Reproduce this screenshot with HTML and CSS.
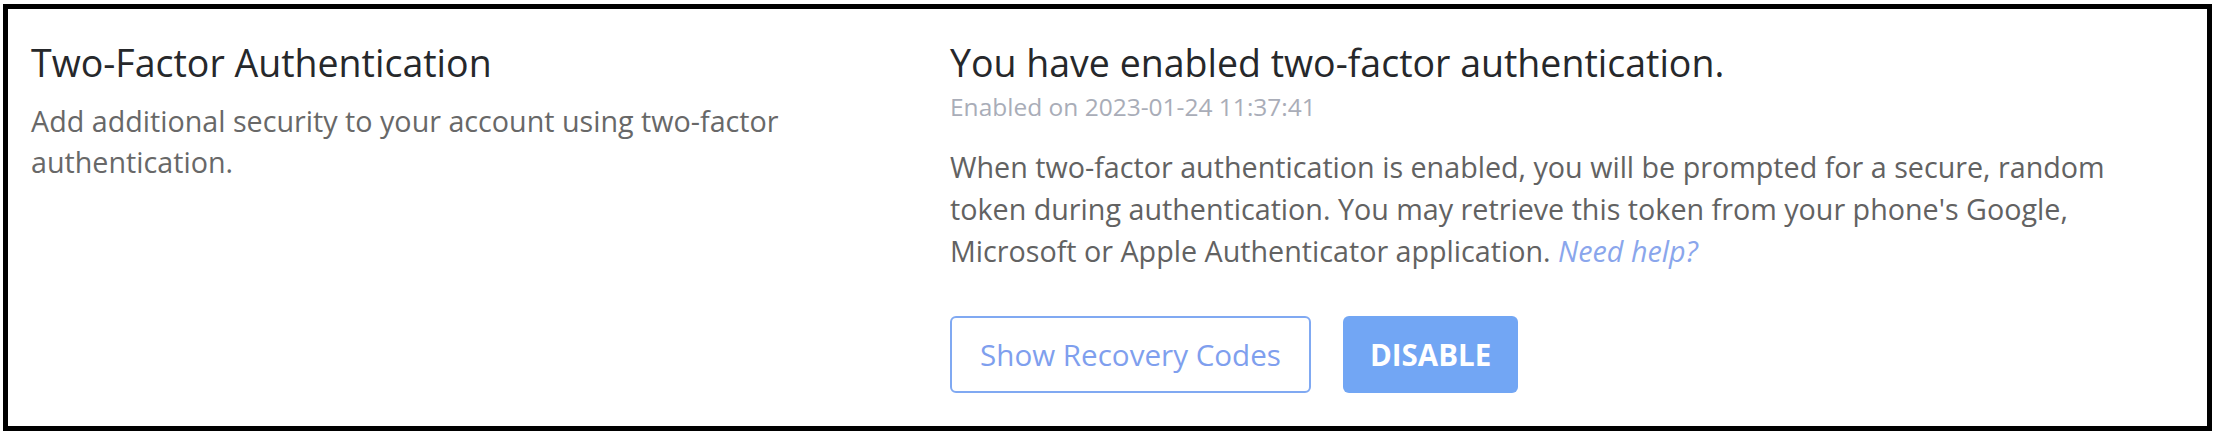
FILE: index.html
```html
<!DOCTYPE html>
<html>
	<head>
		<meta charset="utf-8" />
		<title>Two-Factor Authentication</title>
		<link rel="stylesheet" href="styles.css">
	</head>
	<body>
		<div class="panel">
			<div class="panel-intro">
				<h2 class="panel-title">Two-Factor Authentication</h2>
				<p class="panel-desc">Add additional security to your account using two-factor authentication.</p>
			</div>

			<div class="panel-body">
				<h3 class="status-title">You have enabled two-factor authentication.</h3>
				<div class="status-date">Enabled on 2023-01-24 11:37:41</div>
				<p class="status-text">When two-factor authentication is enabled, you will be prompted for a secure, random token during authentication. You may retrieve this token from your phone's Google, Microsoft or Apple Authenticator application. <a class="help-link" href="#">Need help?</a></p>
				<div class="actions">
					<button class="btn btn-outline" type="button">Show Recovery Codes</button>
					<button class="btn btn-primary" type="button">DISABLE</button>
				</div>
			</div>
		</div>
	</body>
</html>
```

FILE: styles.css
```css
*{
  box-sizing: border-box;
}

body{
  margin: 4px 4px 0 3px;
  background: #ffffff;
  font-family: "Open Sans", "Noto Sans", sans-serif;
}

.panel{
  display: grid;
  grid-template-columns: 919px 1fr;
  border: 5px solid #000000;
  padding: 30px 23px 33px 23px;
  background: #ffffff;
}

.panel-title, .status-title{
  margin: 0;
  font-size: 37.5px;
  line-height: 48.75px;
  font-weight: 400;
  color: #26282b;
}

.panel-desc{
  margin: 12px 0 0 0;
  width: 860px;
  font-size: 28.7px;
  line-height: 41px;
  color: #686868;
}

.panel-body{
  max-width: 1190px;
}

.status-date{
  margin-top: 2px;
  font-size: 24.5px;
  line-height: 34px;
  color: #a9adb8;
}

.status-text{
  margin: 22px 0 0 0;
  font-size: 28.7px;
  line-height: 42px;
  color: #626262;
}

.help-link{
  color: #8aa6ec;
  font-style: italic;
  text-decoration: none;
}

.actions{
  display: flex;
  gap: 32px;
  margin-top: 44px;
}

.btn{
  height: 77px;
  padding: 0 28px;
  border-radius: 6px;
  font-family: "Open Sans", "Noto Sans", sans-serif;
  font-size: 29.6px;
  cursor: pointer;
}

.btn-outline{
  background: #ffffff;
  border: 2px solid #80a9f2;
  color: #7f9fee;
}

.btn-primary{
  padding: 0 27px;
  background: #72a6f4;
  border: 0px;
  color: #ffffff;
  font-weight: 700;
  font-size: 29.5px;
}
```
